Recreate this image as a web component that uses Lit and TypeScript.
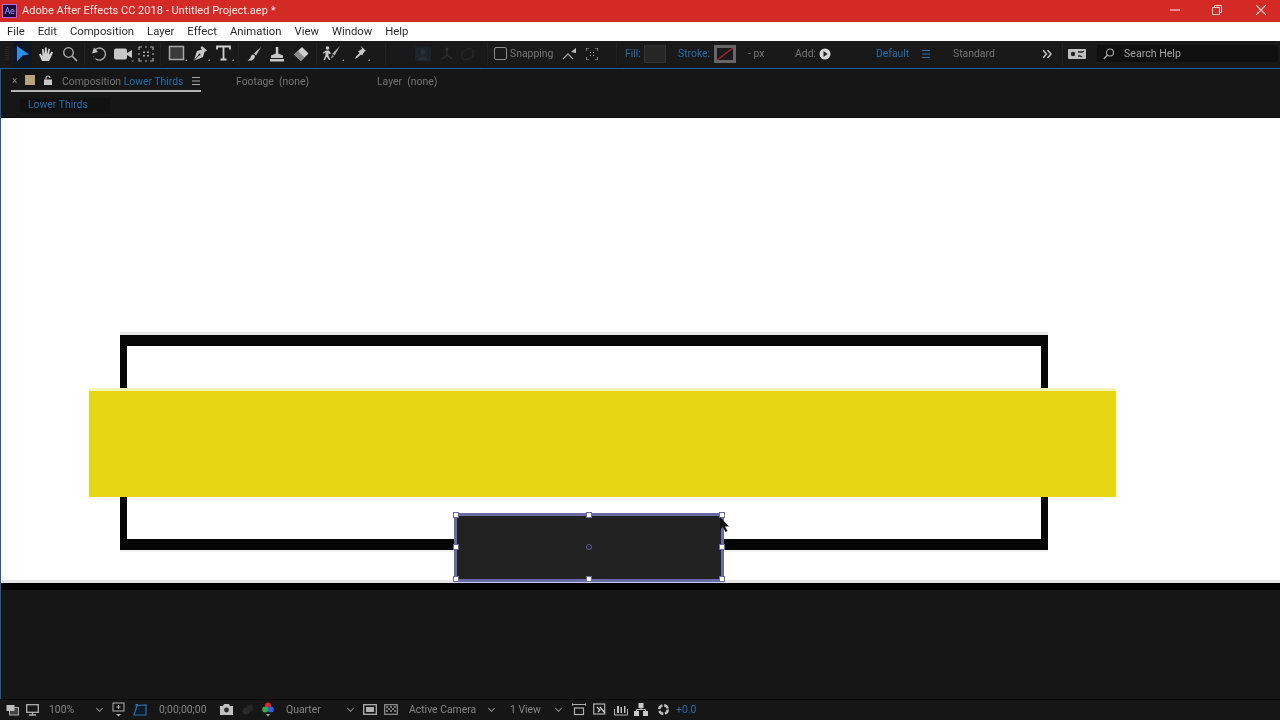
import { LitElement, html, css, svg } from "lit";
import { customElement } from "lit/decorators.js";

type Item = { x: number; w: number; c: unknown; cls?: string };

const icon = (w: number, h: number, body: unknown) =>
  html`<svg class="ico" width=${w} height=${h} viewBox="0 0 ${w} ${h}">${body}</svg>`;

const tools: Item[] = [
  { x: 5, w: 4, c: icon(4, 16, svg`<path d="M1 1v14M3 1v14" stroke="#333" stroke-dasharray="1 1"/>`) },
  { x: 13, w: 19, cls: "sel", c: icon(12, 16, svg`<path d="M0 0L12 8.500 5.500 9.500 0 15.500Z" fill="#2b8ff0"/>`) },
  { x: 38, w: 16, c: icon(16, 16, svg`<path d="M4 15L1 8.500 2.500 7.500 4.500 10 4 3 5.500 3 6.500 8 7 1.500 8.700 1.500 9 8 10.500 2.500 12 3 11 9 13.500 5.500 15 6.500 12.500 12 11 15Z" fill="#d0d0d0"/>`) },
  { x: 62, w: 16, c: icon(16, 16, svg`<circle cx="6.500" cy="6.500" r="4.800" fill="none" stroke="#b0b0b0" stroke-width="1.300"/><path d="M10 10l5 5" stroke="#b0b0b0" stroke-width="1.600"/>`) },
  { x: 84, w: 1, cls: "sep", c: "" },
  { x: 91, w: 16, c: icon(16, 16, svg`<path d="M3 5.500A6 6 0 1 1 5 13" fill="none" stroke="#a8a8a8" stroke-width="1.400"/><path d="M1 7.500L3 1.500 7 6Z" fill="#c0c0c0"/><path d="M5 13a6 6 0 0 1-2.500-3" fill="none" stroke="#666" stroke-width="1.200" stroke-dasharray="1.500 1.500"/>`) },
  { x: 114, w: 20, c: icon(20, 16, svg`<rect x="0" y="2.500" width="13" height="11" rx="2" fill="#c8c8c8"/><path d="M13 7l5-3v8l-5-3Z" fill="#c8c8c8"/><path d="M17.500 15.500h2v-2Z" fill="#999"/>`) },
  { x: 138, w: 16, c: icon(16, 16, svg`<path d="M1 4V1h3M7 1h2M12 1h3v3M1 7v2M15 7v2M1 12v3h3M7 15h2M12 15h3v-3" fill="none" stroke="#aaa" stroke-width="1.200"/><path d="M5 5.500h2v1.500H5zM9 5.500h2v1.500H9zM5 9h2v1.500H5zM9 9h2v1.500H9z" fill="#aaa"/>`) },
  { x: 160, w: 1, cls: "sep", c: "" },
  { x: 168, w: 19, c: icon(19, 17, svg`<rect x="1.500" y="1.500" width="14" height="13" fill="#3a3a3a" stroke="#a8a8a8" stroke-width="1.500"/><path d="M17 16h2v-2Z" fill="#999"/>`) },
  { x: 192, w: 18, c: icon(18, 17, svg`<path d="M10 1l5 4.500-2.500 1.500-1.500 5-6 2.500L2 15.500 3 12l2-6 5-1.500-1.500-1.500Z" fill="#c8c8c8"/><path d="M2.500 15l4.500-5" stroke="#222" stroke-width="1"/><circle cx="7.500" cy="9.500" r="1" fill="#222"/><path d="M16 16h2v-2Z" fill="#999"/>`) },
  { x: 216, w: 18, c: icon(18, 17, svg`<path d="M1 4.500V1.500h13v3M7.500 1.500V14M4.500 14.500h6" fill="none" stroke="#cfcfcf" stroke-width="1.800"/><path d="M16 16h2v-2Z" fill="#999"/>`) },
  { x: 238, w: 1, cls: "sep", c: "" },
  { x: 246, w: 16, c: icon(16, 16, svg`<path d="M15 1L8 7.500 10 9.500Z" fill="#c8c8c8"/><path d="M7.500 8.500c-2 0-2.500 1.500-3 3-.4 1.300-1.500 2-3 3 3 .5 7 0 7.500-4.500Z" fill="#c8c8c8"/>`) },
  { x: 269, w: 16, c: icon(16, 16, svg`<path d="M6.800 1h2.500v6.500L14 9.500v2.500H2V9.500L6.800 7.500Z" fill="#c8c8c8"/><path d="M1 13h14v2.500H1Z" fill="#c8c8c8"/>`) },
  { x: 293, w: 16, c: icon(16, 16, svg`<path d="M9 1L15.500 7.500 8 15 1 8.500Z" fill="#cfcfcf"/><path d="M1 8.500l3.800-3.800 6.500 6.500L8 15Z" fill="#8a8a8a"/>`) },
  { x: 316, w: 1, cls: "sep", c: "" },
  { x: 322, w: 22, c: icon(22, 17, svg`<circle cx="5.500" cy="3" r="1.800" fill="#c8c8c8"/><path d="M4 5.500h3l2 3-1.500.8L6.500 8v3l2 4H7L4.500 11.500 3 15H1.500L3.500 10V7L1.500 9 1 7.500Z" fill="#c8c8c8"/><path d="M18 1L10.500 8.500 12.500 10.500Z" fill="#b8b8b8"/><path d="M10 9.500l2 2-3 2Z" fill="#999"/><path d="M20 16h2v-2Z" fill="#999"/>`) },
  { x: 352, w: 18, c: icon(18, 17, svg`<path d="M9 1l5 5-1.500 .5-2.500 4-1-1L5 13 3 14 4 11.500 7.500 8 6 6.500l4-2.500Z" fill="#c8c8c8"/><path d="M16 16h2v-2Z" fill="#999"/>`) },
  { x: 385, w: 1, cls: "sep", c: "" },
  { x: 415, w: 16, c: icon(16, 14, svg`<rect x="0" y="0" width="16" height="14" fill="#1d232b"/><circle cx="8" cy="5" r="2.500" fill="#29303a"/><path d="M3 13c1-4 9-4 10 0" fill="#29303a"/>`) },
  { x: 440, w: 14, c: icon(14, 14, svg`<path d="M7 2v6L2 12M7 8l5 4" stroke="#2e2e2e" fill="none" stroke-width="1.200"/><circle cx="7" cy="2" r="1.500" fill="#333"/>`) },
  { x: 461, w: 13, c: icon(13, 14, svg`<path d="M1 5l8-4 3 2v7l-8 3-3-2Z" stroke="#2a2a2a" fill="none"/>`) },
  { x: 487, w: 1, cls: "sep", c: "" },
  { x: 494, w: 13, cls: "chk", c: "" },
  { x: 510, w: 44, cls: "t dim", c: "Snapping" },
  { x: 562, w: 16, c: icon(16, 14, svg`<path d="M1 12l5-5 5 5" fill="none" stroke="#9a9a9a" stroke-width="1.300"/><path d="M9 5l5-4v5Z" fill="#c0c0c0"/>`) },
  { x: 586, w: 12, c: icon(12, 12, svg`<path d="M0 3V0h3M9 0h3v3M0 9v3h3M12 9v3H9" fill="none" stroke="#b0b0b0" stroke-width="1.200"/><path d="M4 4h1v1H4zM7 4h1v1H7zM4 7h1v1H4zM7 7h1v1H7z" fill="#b0b0b0"/>`) },
  { x: 616, w: 1, cls: "sep", c: "" },
  { x: 625, w: 18, cls: "t blue", c: "Fill:" },
  { x: 644, w: 22, cls: "fill", c: "" },
  { x: 678, w: 36, cls: "t blue", c: "Stroke:" },
  { x: 714, w: 22, cls: "stroke", c: icon(22, 18, svg`<rect x="1.500" y="1.500" width="19" height="15" fill="#1a1a1a" stroke="#666" stroke-width="3"/><path d="M3 15L19 3" stroke="#a81f2e" stroke-width="1.500"/>`) },
  { x: 748, w: 20, cls: "t dim", c: "- px" },
  { x: 795, w: 24, cls: "t dim", c: "Add:" },
  { x: 819, w: 12, c: icon(12, 12, svg`<circle cx="6" cy="6" r="5.500" fill="#d8d8d8"/><path d="M4.500 3l4 3-4 3Z" fill="#1a1a1a"/>`) },
  { x: 876, w: 36, cls: "t blue", c: "Default" },
  { x: 922, w: 9, c: icon(9, 8, svg`<path d="M0 .5h8M0 4h8M0 7.500h8" stroke="#2e6fae" stroke-width="1"/>`) },
  { x: 953, w: 44, cls: "t dim", c: "Standard" },
  { x: 1043, w: 10, c: icon(10, 8, svg`<path d="M0 0l3.500 4L0 8M4.500 0L8 4 4.500 8" fill="none" stroke="#c0c0c0" stroke-width="1.500"/>`) },
  { x: 1062, w: 1, cls: "sep", c: "" },
  { x: 1068, w: 18, c: icon(18, 10, svg`<rect width="18" height="10" rx="1" fill="#c0c0c0"/><circle cx="5" cy="5" r="2.200" fill="#222"/><path d="M10 3h4l2-1M10 7h2l2 1" stroke="#222" stroke-width="1.300" fill="none"/>`) },
  { x: 1097, w: 181, cls: "search", c: html`${icon(11, 12, svg`<circle cx="7" cy="4.500" r="3.500" fill="none" stroke="#aaa" stroke-width="1.100"/><path d="M4.500 7L.8 11" stroke="#aaa" stroke-width="1.400"/>`)}<span>Search Help</span>` },
];

const foot: Item[] = [
  { x: 6, w: 13, c: icon(13, 12, svg`<rect x="3.500" y="3.500" width="9" height="7.500" fill="#444" stroke="#aaa"/><rect x=".5" y="1" width="8" height="6" fill="#bdbdbd"/>`) },
  { x: 26, w: 13, c: icon(13, 12, svg`<rect x=".7" y=".7" width="11.600" height="7.600" fill="none" stroke="#b0b0b0" stroke-width="1.300"/><path d="M3 11h7M6.500 8.500v2.500" stroke="#b0b0b0" stroke-width="1.300"/>`) },
  { x: 49, w: 46, cls: "t dim2", c: "100%" },
  { x: 96, w: 8, cls: "chev", c: "" },
  { x: 112, w: 13, c: icon(13, 15, svg`<rect x="1" y="1" width="11" height="8" fill="none" stroke="#b0b0b0"/><path d="M6.500 3v4M4.500 5h4" stroke="#b0b0b0"/><path d="M4 12h5l-2.500 2.500Z" fill="#b0b0b0"/>`) },
  { x: 133, w: 14, c: icon(14, 12, svg`<path d="M4 1.500L13 1v10H1Z" fill="#0e1a26" stroke="#2c6ea8" stroke-width="1.200"/><rect x="2.500" y="0" width="2.500" height="2.500" fill="#2c6ea8"/>`) },
  { x: 159, w: 60, cls: "t dim2", c: "0;00;00;00" },
  { x: 220, w: 13, c: icon(13, 11, svg`<path d="M0 2h3l1-2h5l1 2h3v9H0Z" fill="#c0c0c0"/><circle cx="6.500" cy="6" r="2.400" fill="#2a2a2a"/>`) },
  { x: 241, w: 13, c: icon(13, 12, svg`<circle cx="5" cy="7" r="3.500" fill="#2a2a2a"/><circle cx="9" cy="4" r="3.500" fill="#252525"/>`) },
  { x: 262, w: 12, c: icon(12, 15, svg`<circle cx="6" cy="3.500" r="3" fill="#d8262e"/><circle cx="3.200" cy="7.500" r="3" fill="#3aa84a"/><circle cx="8.800" cy="7.500" r="3" fill="#3060d8"/><path d="M4 12h4l-2 2.500Z" fill="#b0b0b0"/>`) },
  { x: 286, w: 60, cls: "t dim2", c: "Quarter" },
  { x: 347, w: 8, cls: "chev", c: "" },
  { x: 363, w: 14, c: icon(14, 11, svg`<rect x=".7" y=".7" width="12.600" height="9.600" fill="none" stroke="#b0b0b0" stroke-width="1.300"/><rect x="3" y="3" width="8" height="5" fill="#b0b0b0"/>`) },
  { x: 384, w: 14, c: icon(14, 11, svg`<rect x=".7" y=".7" width="12.600" height="9.600" fill="none" stroke="#8a8a8a" stroke-width="1.300"/><path d="M2 2h2v2H2zM6 2h2v2H6zM10 2h2v2h-2zM4 4h2v2H4zM8 4h2v2H8zM2 6h2v2H2zM6 6h2v2H6zM10 6h2v2h-2z" fill="#777"/>`) },
  { x: 409, w: 78, cls: "t dim2", c: "Active Camera" },
  { x: 488, w: 8, cls: "chev", c: "" },
  { x: 510, w: 44, cls: "t dim2", c: "1 View" },
  { x: 555, w: 8, cls: "chev", c: "" },
  { x: 572, w: 14, c: icon(14, 13, svg`<path d="M0 1.500h14M0 0v3M14 0v3" stroke="#b0b0b0" stroke-width="1.200"/><rect x="2.500" y="5" width="9" height="6.500" fill="none" stroke="#b0b0b0" stroke-width="1.200"/>`) },
  { x: 593, w: 14, c: icon(14, 13, svg`<rect x=".7" y="1" width="11" height="10" fill="none" stroke="#b0b0b0" stroke-width="1.200"/><path d="M4 4l3 3-2 2M7 4l5 6" stroke="#d0d0d0" stroke-width="1.200" fill="none"/>`) },
  { x: 614, w: 14, c: icon(14, 12, svg`<path d="M.5 5v6h13V5" fill="none" stroke="#b0b0b0"/><path d="M3 2h2v7H3zM6.500 3h1.500v6H6.500zM10 2h1.500v7H10z" fill="#c0c0c0"/>`) },
  { x: 634, w: 14, c: icon(14, 13, svg`<rect x="4.500" y="0" width="5" height="5" fill="#c8c8c8"/><rect x="0" y="8" width="5" height="5" fill="#c8c8c8"/><rect x="9" y="8" width="5" height="5" fill="#c8c8c8"/><path d="M7 5v2M2.500 8V6.500h9V8" stroke="#c8c8c8" fill="none"/>`) },
  { x: 657, w: 13, c: icon(13, 13, svg`<circle cx="6.500" cy="6.500" r="4.300" fill="none" stroke="#c0c0c0" stroke-width="2.400" stroke-dasharray="5 1.800"/>`) },
  { x: 676, w: 24, cls: "t blue", c: "+0.0" },
];

const handles = [
  ["l", "t"], ["c", "t"], ["r", "t"],
  ["l", "m"], ["r", "m"],
  ["l", "b"], ["c", "b"], ["r", "b"],
];

@customElement("app-root")
export class AppRoot extends LitElement {
  static styles = css`
    :host {
      display: block; width: 1280px; height: 720px; overflow: hidden;
      background: #161616; filter: blur(0.4px);
      font: 10.400px Roboto, "Open Sans", sans-serif; color: #8a8a8a;
    }
    .ico { display: block; flex: none; }
    .title { height: 22px; background: #d42a26; display: flex; align-items: center; }
    .logo {
      width: 15px; height: 14px; margin: 0 5px 0 2px; background: #1c0a3c; border: 1px solid #b868dc;
      box-sizing: border-box; color: #a79cff; font-size: 9px; line-height: 12px; text-align: center; letter-spacing: -.3px;
    }
    .title .name { font-size: 11.050px; flex: 1; padding-bottom: 1px; color: #fbe7e4; }
    .win { display: flex; align-items: center; padding: 0 14px 2px 0; }
    .win .ico:nth-child(2) { margin: 0 34px 0 32px; }
    .menu { height: 19px; background: #fff; color: #2a2a2a; display: flex; align-items: center; gap: 13px; padding-left: 7px; font-size: 11.300px; }
    .bar { height: 27px; padding-bottom: 2px; box-sizing: border-box; background: #191919; display: flex; align-items: center; }
    .it { flex: none; display: flex; align-items: center; white-space: nowrap; }
    .t { color: #7c7c7c; }
    .blue { color: #2a6cab; }
    .dim { color: #767676; }
    .dim2 { color: #858585; }
    .sep { height: 22px; background: #232323; }
    .sel { height: 25px; background: #0f1822; justify-content: center; }
    .chk { height: 13px; border: 1.500px solid #8c8c8c; border-radius: 2px; box-sizing: border-box; }
    .fill { height: 18px; background: #262626; border: 1px solid #333; box-sizing: border-box; }
    .search { height: 17px; background: #0f0f0f; border-radius: 2px; padding-left: 6px; color: #a4a4a4; font-size: 10.600px; box-sizing: border-box; }
    .search span { margin-left: 10px; }
    .chev { height: 8px; }
    .chev::before {
      content: ""; display: block; width: 5px; height: 5px; margin: 0 0 2px 1px; box-sizing: border-box;
      border-right: 1px solid #8a8a8a; border-bottom: 1px solid #8a8a8a; transform: rotate(45deg);
    }
    .main { position: relative; height: 652px; border-left: 1px solid #1d5c96; box-sizing: border-box; border-top: 1px solid #1f5f9c; }
    .tabs { height: 49px; background: #161616; color: #757575; box-sizing: border-box; border-bottom: 1px solid #0a0a0a; }
    .tabrow { height: 21px; padding-top: 3px; display: flex; align-items: center; box-sizing: border-box; }
    .x { margin-left: 11px; width: 8px; color: #888; font-size: 10px; line-height: 1; }
    .sw { width: 10px; height: 10px; background: #b6a57c; margin: -3px 9px 0 5px; }
    .lock { margin: -3px 10px 0 0; }
    .comp { width: 122px; white-space: nowrap; }
    .comp b { font-weight: 400; color: #2a6cab; }
    .burger { margin: 0 35px 0 8px; }
    .ft { width: 141px; white-space: pre; }
    .ly { white-space: pre; }
    .underline { height: 1.500px; width: 190px; margin-left: 10px; background: #b4b4b4; }
    .sub { margin: 6px 0 0 19px; width: 90px; height: 15px; line-height: 14px; padding-left: 8px; box-sizing: border-box; background: #111; color: #2a6cab; }
    .viewer {
      height: 465px; background: #fff; position: relative; box-sizing: border-box; overflow: hidden;
      box-shadow: inset 0 -3px 0 #e4e4e4;
    }
    .frame { position: absolute; left: 119px; top: 217px; width: 928px; height: 215px; box-sizing: border-box;
      border: solid #060606; border-width: 11px 7px; box-shadow: 0 -3px 0 #e8e8e8, 0 2px 0 #f2f2f2; }
    .yellow { position: absolute; left: 88px; top: 273px; width: 1027px; height: 106px; background: #e6d614; box-shadow: 0 -3px 0 #f8f4b8; }
    .shape { position: absolute; left: 453px; top: 395px; width: 270px; height: 69px; background: #222; border: 3px solid #6a6aa6; box-sizing: border-box; box-shadow: 0 1px 0 #c8c8ea; }
    .h { position: absolute; width: 4px; height: 4px; background: #fff; border: 1.500px solid #6a6aa6; }
    .h.l { left: -4px; } .h.c { left: 129px; } .h.r { left: 262px; }
    .h.t { top: -4px; } .h.m { top: 28px; } .h.b { top: 60px; }
    .ctr { position: absolute; left: 129px; top: 28px; width: 4px; height: 4px; border: 1.500px solid #5a5aa8; border-radius: 50%; }
    .cursor { position: absolute; left: 718px; top: 399px; }
    .black { height: 7px; background: #000; }
    .foot { position: absolute; left: -1px; right: 0; bottom: 0; height: 20px; background: #161616; border-top: 1px solid #0c0c0c; }
    .foot .bar { height: 19px; padding: 0; background: none; }
  `;

  private row(items: Item[]) {
    let cur = 0;
    return items.map((i) => {
      const m = i.x - cur;
      cur = i.x + i.w;
      return html`<div class="it ${i.cls ?? ""}" style="margin-left:${m}px;width:${i.w}px">${i.c}</div>`;
    });
  }

  render() {
    return html`
      <div class="title">
        <div class="logo">Ae</div>
        <div class="name">Adobe After Effects CC 2018 - Untitled Project.aep *</div>
        <div class="win">
          ${icon(10, 10, svg`<path d="M0 5h10" stroke="#f3d5d2" stroke-width="1.200"/>`)}
          ${icon(10, 10, svg`<path d="M2.500 2.500V.5h7v7h-2M.5 2.500h7v7h-7Z" fill="none" stroke="#f3d5d2" stroke-width="1"/>`)}
          ${icon(10, 10, svg`<path d="M0 0l10 10M10 0L0 10" stroke="#f3d5d2" stroke-width="1.200"/>`)}
        </div>
      </div>
      <div class="menu">
        <span>File</span><span>Edit</span><span>Composition</span><span>Layer</span><span>Effect</span><span>Animation</span><span>View</span><span>Window</span><span>Help</span>
      </div>
      <div class="bar">${this.row(tools)}</div>
      <div class="main">
        <div class="tabs">
          <div class="tabrow">
            <span class="x">×</span>
            <span class="sw"></span>
            <span class="lock">${icon(8, 10, svg`<path d="M2 4.500V3a2 2 0 0 1 4 0" fill="none" stroke="#c8c8c8" stroke-width="1.200"/><rect y="4.500" width="8" height="5.500" fill="#c8c8c8"/>`)}</span>
            <span class="comp">Composition <b>Lower Thirds</b></span>
            <span class="burger">${icon(9, 8, svg`<path d="M0 .5h8M0 4h8M0 7.500h8" stroke="#a8a8a8"/>`)}</span>
            <span class="ft">Footage  (none)</span>
            <span class="ly">Layer  (none)</span>
          </div>
          <div class="underline"></div>
          <div class="sub">Lower Thirds</div>
        </div>
        <div class="viewer">
          <div class="frame"></div>
          <div class="yellow"></div>
          <div class="shape">
            ${handles.map(([a, b]) => html`<i class="h ${a} ${b}"></i>`)}
            <i class="ctr"></i>
          </div>
          <svg class="cursor" width="11" height="16" viewBox="0 0 11 16"><path d="M1 0v13l3-3 2.500 5 2-1-2.500-4.500H10Z" fill="#111"/></svg>
        </div>
        <div class="black"></div>
        <div class="foot"><div class="bar">${this.row(foot)}</div></div>
      </div>
    `;
  }
}
